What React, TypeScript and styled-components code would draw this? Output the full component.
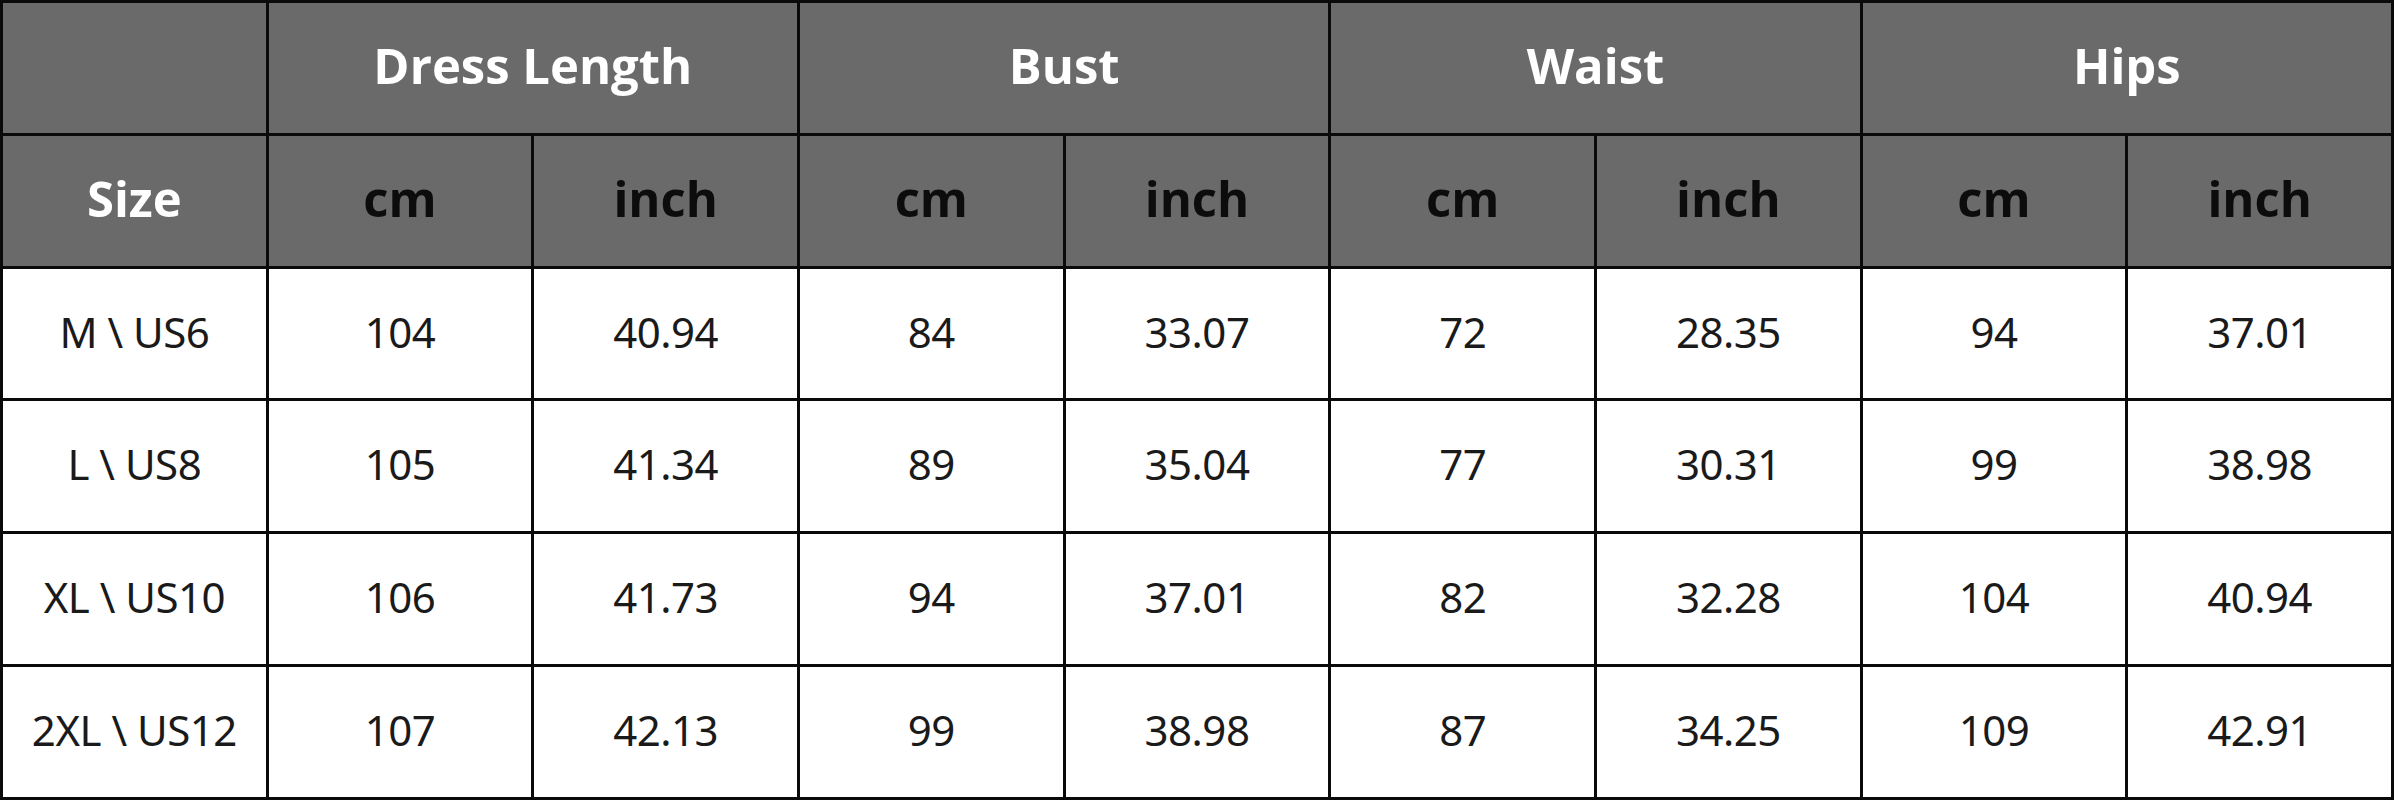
import React from 'react';
import styled, { createGlobalStyle } from 'styled-components';

const GlobalStyle = createGlobalStyle`
    html, body {
        margin: 0;
        padding: 0;
        background: #ffffff;
    }
`;

const SizeTable = styled.div`
    display: grid;
    grid-template-columns: repeat(9, 1fr);
    grid-template-rows: repeat(6, 1fr);
    gap: 3px;
    padding: 3px;
    width: 2394px;
    height: 800px;
    box-sizing: border-box;
    background: #0a0a0a;
`;

const Cell = styled.div<{ $span?: number; $head?: boolean; $light?: boolean }>`
    grid-column: span ${p => p.$span || 1};
    display: flex;
    align-items: center;
    justify-content: center;
    padding-bottom: 5px;
    background: ${p => (p.$head ? '#6a6a6a' : '#ffffff')};
    color: ${p => (p.$head ? (p.$light ? '#ffffff' : '#0c0c0c') : '#1a1a1a')};
    font-family: ${p => (p.$head ? '"Open Sans", "DejaVu Sans", sans-serif' : '"Noto Sans", "Open Sans", sans-serif')};
    font-weight: ${p => (p.$head ? 700 : 400)};
    font-size: ${p => (p.$head ? '49px' : '42px')};
    letter-spacing: ${p => (p.$head ? '0' : '-0.5px')};
`;

const groups = ['Dress Length', 'Bust', 'Waist', 'Hips'];

const rows = [
    ['M \\ US6', '104', '40.94', '84', '33.07', '72', '28.35', '94', '37.01'],
    ['L \\ US8', '105', '41.34', '89', '35.04', '77', '30.31', '99', '38.98'],
    ['XL \\ US10', '106', '41.73', '94', '37.01', '82', '32.28', '104', '40.94'],
    ['2XL \\ US12', '107', '42.13', '99', '38.98', '87', '34.25', '109', '42.91'],
];

export default function App() {
    return (
        <>
            <GlobalStyle />
            <SizeTable>
                <Cell $head />
                {groups.map(g => (
                    <Cell key={g} $head $light $span={2}>{g}</Cell>
                ))}
                <Cell $head $light>Size</Cell>
                {groups.map(g => (
                    <React.Fragment key={g}>
                        <Cell $head>cm</Cell>
                        <Cell $head>inch</Cell>
                    </React.Fragment>
                ))}
                {rows.map(r => r.map((v, i) => <Cell key={r[0] + i}>{v}</Cell>))}
            </SizeTable>
        </>
    );
}
